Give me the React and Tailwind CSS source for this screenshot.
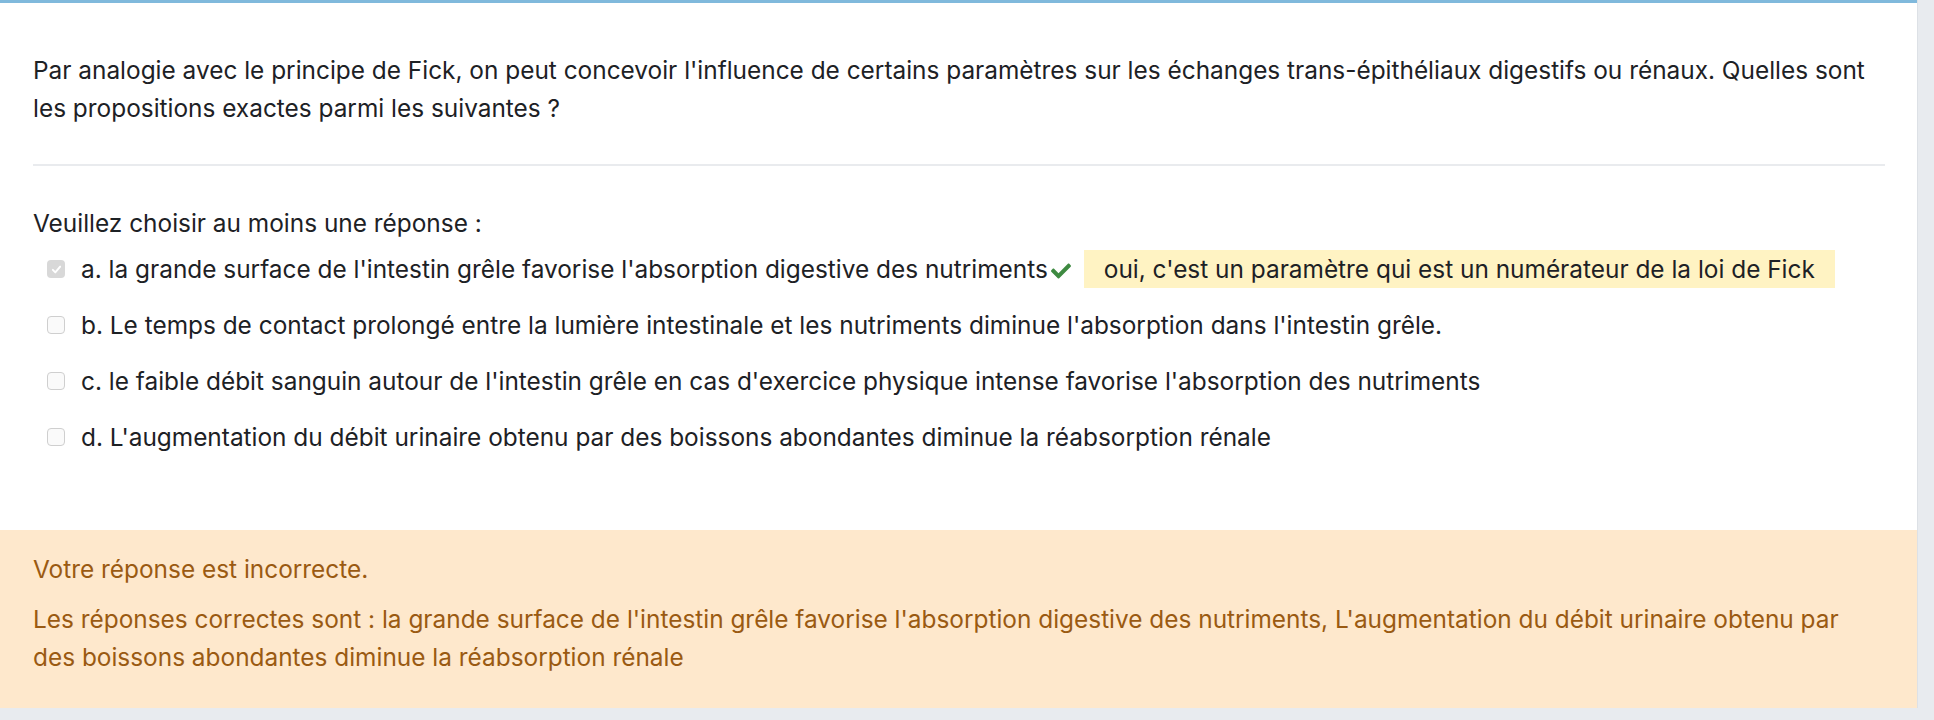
import React from "react";

function CheckBox({ checked }) {
  if (checked) {
    return (
      <span className="flex h-[18px] w-[18px] shrink-0 items-center justify-center rounded-[4px] bg-[#d8d8d8]">
        <svg viewBox="0 0 16 16" className="h-[13px] w-[13px]" fill="none" stroke="#ffffff" strokeWidth="2.4" strokeLinecap="round" strokeLinejoin="round">
          <path d="M3.5 8.5l3 3 6-7" />
        </svg>
      </span>
    );
  }
  return <span className="block h-[18px] w-[18px] shrink-0 rounded-[4px] border border-[#cfcfcf] bg-[#fafafa]" />;
}

function GreenCheck() {
  return (
    <svg viewBox="0 0 512 512" className="mx-[2px] inline-block h-[20px] w-[22px] align-[-3px]" fill="#3e8a41">
      <path d="M173.898 439.404l-166.4-166.4c-9.997-9.997-9.997-26.206 0-36.204l36.203-36.204c9.997-9.998 26.207-9.998 36.204 0L192 312.69 432.095 72.596c9.997-9.997 26.207-9.997 36.204 0l36.203 36.204c9.997 9.997 9.997 26.206 0 36.204l-294.4 294.401c-9.998 9.997-26.207 9.997-36.204-.001z" />
    </svg>
  );
}

const answers = [
  { key: "a", text: "a. la grande surface de l'intestin grêle favorise l'absorption digestive des nutriments", checked: true, feedback: "oui, c'est un paramètre qui est un numérateur de la loi de Fick" },
  { key: "b", text: "b. Le temps de contact prolongé entre la lumière intestinale et les nutriments diminue l'absorption dans l'intestin grêle." },
  { key: "c", text: "c. le faible débit sanguin autour de l'intestin grêle en cas d'exercice physique intense favorise l'absorption des nutriments" },
  { key: "d", text: "d. L'augmentation du débit urinaire obtenu par des boissons abondantes diminue la réabsorption rénale" },
];

export default function App() {
  return (
    <div className="min-h-[720px] w-full bg-[#e8ebef] font-['Inter',sans-serif] text-[24.4px] leading-[38px] text-[#1d2125]">
      <div className="w-[1918px] border-r border-[#dde1e6] bg-white">
        <div className="h-[3px] bg-[#80b9dc]" />
        <div className="px-[33px] pt-[48px]">
          <p>
            Par analogie avec le principe de Fick, on peut concevoir l'influence de certains paramètres sur les échanges trans-épithéliaux digestifs ou rénaux. Quelles sont les propositions exactes parmi les suivantes ?
          </p>
          <div className="mt-[37px] mr-[-1px] h-[2px] bg-[#e9ebee]" />
          <p className="mt-[38px]">Veuillez choisir au moins une réponse :</p>
          <div className="mt-[8px] flex flex-col gap-[18px] pl-[14px]">
            {answers.map((a) => (
              <div key={a.key} className="flex items-center gap-[16px]">
                <CheckBox checked={a.checked} />
                <div>
                  <span>{a.text}</span>
                  {a.checked && <GreenCheck />}
                  {a.feedback && (
                    <span className="ml-[10px] inline-block bg-[#fff3c3] px-[20px]">{a.feedback}</span>
                  )}
                </div>
              </div>
            ))}
          </div>
        </div>
        <div className="mt-[74px] bg-[#fee8cc] px-[33px] pt-[20px] pb-[32px] text-[#9a5a12]">
          <p>Votre réponse est incorrecte.</p>
          <p className="mt-[12px]">
            Les réponses correctes sont : la grande surface de l'intestin grêle favorise l'absorption digestive des nutriments, L'augmentation du débit urinaire obtenu par des boissons abondantes diminue la réabsorption rénale
          </p>
        </div>
      </div>
    </div>
  );
}
